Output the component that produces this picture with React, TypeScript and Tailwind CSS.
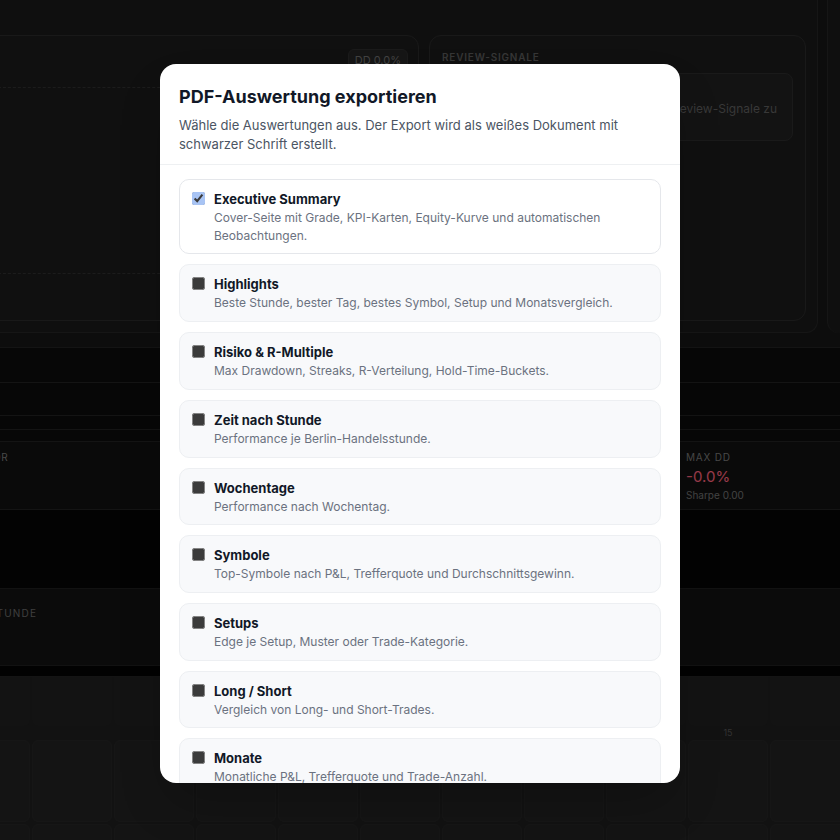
import { useState } from 'react';

type Section = {
  id: string;
  title: string;
  description: string;
};

const sections: Section[] = [
  {
    id: 'summary',
    title: 'Executive Summary',
    description: 'Cover-Seite mit Grade, KPI-Karten, Equity-Kurve und automatischen Beobachtungen.',
  },
  { id: 'highlights', title: 'Highlights', description: 'Beste Stunde, bester Tag, bestes Symbol, Setup und Monatsvergleich.' },
  { id: 'risk', title: 'Risiko & R-Multiple', description: 'Max Drawdown, Streaks, R-Verteilung, Hold-Time-Buckets.' },
  { id: 'hours', title: 'Zeit nach Stunde', description: 'Performance je Berlin-Handelsstunde.' },
  { id: 'weekdays', title: 'Wochentage', description: 'Performance nach Wochentag.' },
  { id: 'symbols', title: 'Symbole', description: 'Top-Symbole nach P&L, Trefferquote und Durchschnittsgewinn.' },
  { id: 'setups', title: 'Setups', description: 'Edge je Setup, Muster oder Trade-Kategorie.' },
  { id: 'longshort', title: 'Long / Short', description: 'Vergleich von Long- und Short-Trades.' },
  { id: 'months', title: 'Monate', description: 'Monatliche P&L, Trefferquote und Trade-Anzahl.' },
  { id: 'trades', title: 'Trade-Liste', description: 'Alle Trades mit Einstieg, Ausstieg, Größe und Ergebnis.' },
];

const stats = [
  { label: 'Profit Faktor', value: '0.00', sub: 'Ø R 0.00', tone: 'text-neutral-300' },
  { label: 'Trefferquote', value: '0%', sub: '0 / 0 Trades', tone: 'text-neutral-300' },
  { label: 'Netto P&L', value: '0.00 €', sub: 'Brutto 0.00 €', tone: 'text-neutral-300' },
  { label: 'Max DD', value: '-0.0%', sub: 'Sharpe 0.00', tone: 'text-rose-400' },
];

// calendar days, labelled every fifth day
const days = Array.from({ length: 11 }, (_, i) => i + 6);

function Dashboard() {
  return (
    <div className="flex flex-col">
      {/* equity chart + review signals */}
      <div className="flex h-[333px]">
        <div className="-ml-[40px] flex w-[858px] shrink-0 gap-[10px] rounded-b-xl border border-t-0 border-[#262626] bg-[#1a1a1a] pb-[11px] pl-[12px] pr-[13px] pt-[35px]">
          <div className="flex w-[446px] shrink-0 flex-col rounded-xl border border-[#2a2a2a] bg-[#1c1c1c]">
            <div className="flex justify-end pr-[10px] pt-[13px]">
              <span className="rounded-md border border-[#2e2e2e] bg-[#252525] px-[6px] py-[2px] text-[11px] text-[#6e6e6e]">
                DD 0.0%
              </span>
            </div>
            <div className="mx-[14px] mt-[15px] h-[187px] border-y border-dashed border-[#303030]" />
          </div>
          <div className="flex w-[377px] shrink-0 flex-col rounded-xl border border-[#2a2a2a] bg-[#1c1c1c] px-[12px] pt-[14px]">
            <span className="text-[10px] font-semibold uppercase tracking-[0.08em] text-[#5a5a5a]">Review-Signale</span>
            <div className="mt-[8px] flex h-[68px] items-center justify-end rounded-lg border border-[#2c2c2c] bg-[#202020] pr-[15px] pt-[4px] text-[12px] text-[#5e5e5e]">
              Zu wenige Trades, um Review-Signale zu
            </div>
          </div>
        </div>
        <div className="ml-[9px] w-[60px] shrink-0 rounded-bl-xl border-l border-[#262626] bg-[#1a1a1a]" />
      </div>

      {/* table rows */}
      <div className="mt-[14px] flex flex-col bg-[#0d0d0d]">
        <div className="h-[36px] border-y border-[#222]" />
        <div className="h-[33px] border-b border-[#222]" />
        <div className="h-[14px] border-b border-[#222]" />
        <div className="h-[12px] border-b border-[#222]" />
      </div>

      {/* KPI row */}
      <div className="-ml-[91px] flex h-[68px] border-b border-[#222] bg-[#111]">
        {stats.map((s) => (
          <div key={s.label} className="flex w-[255px] shrink-0 flex-col px-[12px] pt-[8px]">
            <span className="text-[10px] uppercase tracking-[0.08em] text-[#7a7a7a]">{s.label}</span>
            <span className={`mt-[1px] text-[15px] leading-[22px] ${s.tone}`}>{s.value}</span>
            <span className="text-[10px] text-[#717171]">{s.sub}</span>
          </div>
        ))}
      </div>

      <div className="h-[78px] bg-[#050505]" />

      <div className="-ml-[134px] h-[78px] border-y border-[#1e1e1e] bg-[#131313] px-[12px] pt-[10px]">
        <span className="text-[10px] uppercase tracking-[0.12em] text-[#6a6a6a]">Performance je Stunde</span>
      </div>

      <div className="h-[11px] border-b border-[#222] bg-[#040404]" />

      {/* daily heatmap */}
      <div className="-ml-[50px] flex-1 bg-[#1e1e1e]">
        <div className="grid grid-cols-[repeat(11,80px)] gap-x-[2px]">
          {days.map((d) => (
            <div key={`a${d}`} className="h-[49px] rounded-b-md bg-[#202020]" />
          ))}
          {days.map((d) => (
            <div key={`l${d}`} className="flex h-[14px] items-center justify-center text-[9px] text-[#555]">
              {d % 5 === 0 ? d : ''}
            </div>
          ))}
        </div>
        <div className="grid grid-cols-[repeat(11,80px)] gap-[2px]">
          {days.concat(days).map((d, i) => (
            <div key={`c${i}`} className="h-[82px] rounded-md border border-[#262626] bg-[#222]" />
          ))}
        </div>
      </div>
    </div>
  );
}

function SectionRow({ section, checked, onToggle }: { section: Section; checked: boolean; onToggle: () => void }) {
  return (
    <label
      className={`flex cursor-pointer gap-[9px] rounded-[10px] border pb-[9px] pl-[12px] pr-[12px] pt-[9px] ${
        checked ? 'border-[#e5e7eb] bg-white' : 'border-[#edeff2] bg-[#f8f9fb]'
      }`}
    >
      <input
        type="checkbox"
        checked={checked}
        onChange={onToggle}
        className="mt-[3px] h-[13px] w-[13px] shrink-0 accent-[#a8c4f4] [color-scheme:dark]"
      />
      <div className="flex min-w-0 flex-col">
        <span className="text-[13px] font-bold leading-5 text-[#111827]">{section.title}</span>
        <span className="text-[12px] leading-[17.7px] text-[#6b7280]">{section.description}</span>
      </div>
    </label>
  );
}

export default function App() {
  const [selected, setSelected] = useState<Record<string, boolean>>({ summary: true });

  return (
    <div className="relative h-[840px] w-[840px] overflow-hidden bg-[#171717] font-['Inter','Noto_Sans',sans-serif]">
      <Dashboard />
      <div className="absolute inset-0 bg-black/40" />

      <div className="absolute inset-0 flex justify-center pt-[64px]">
        <div className="flex h-[719px] w-[520px] flex-col overflow-hidden rounded-2xl bg-white shadow-2xl">
          <div className="border-b border-[#eef0f2] px-[19px] pb-[10px] pt-[19px]">
            <h2 className="text-[18px] font-bold leading-7 text-[#111827]">PDF-Auswertung exportieren</h2>
            <p className="mt-[5px] text-[13px] leading-[19px] text-[#4b5563]">
              Wähle die Auswertungen aus. Der Export wird als weißes Dokument mit schwarzer Schrift erstellt.
            </p>
          </div>
          <div className="flex flex-1 flex-col gap-[10px] overflow-y-auto px-[19px] pt-[14px] [scrollbar-width:none]">
            {sections.map((s) => (
              <SectionRow
                key={s.id}
                section={s}
                checked={!!selected[s.id]}
                onToggle={() => setSelected((prev) => ({ ...prev, [s.id]: !prev[s.id] }))}
              />
            ))}
          </div>
        </div>
      </div>
    </div>
  );
}
